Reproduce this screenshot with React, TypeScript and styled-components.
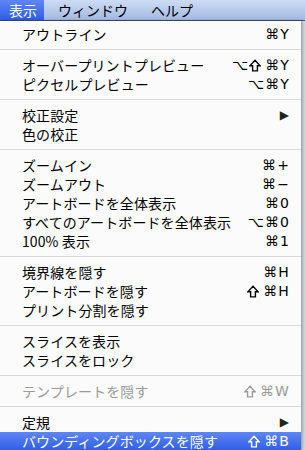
import styled, { createGlobalStyle } from 'styled-components'

const GlobalStyle = createGlobalStyle`
  html, body {
    margin: 0;
    padding: 0;
    background: #d4d6da;
  }
  body {
    width: 305px;
    height: 450px;
    overflow: hidden;
    font-family: "Noto Sans CJK JP", "DejaVu Sans", sans-serif;
  }
`

const Screen = styled.div`
  display: flex;
  flex-direction: column;
  width: 305px;
  height: 450px;
  overflow: hidden;
`

const MenuBar = styled.div`
  display: flex;
  align-items: stretch;
  height: 20px;
  background: linear-gradient(#cddcf6, #a4b9df);
  border-bottom: 1px solid #3b4f79;
  flex-shrink: 0;
`

const BarItem = styled.div<{ $active?: boolean }>`
  display: flex;
  align-items: center;
  padding: 0 ${({ $active }) => ($active ? '7px' : '9px')} 0 ${({ $active }) => ($active ? '9px' : '4px')};
  font-size: 14px;
  color: ${({ $active }) => ($active ? '#fff' : '#000')};
  background: ${({ $active }) =>
    $active ? 'linear-gradient(#5f86f3, #2f5de6)' : 'transparent'};
  margin-right: 10px;
`

const Menu = styled.div`
  display: flex;
  flex-direction: column;
  width: 301px;
  padding-top: 4px;
  background: rgba(252, 252, 252, 0.97);
  box-shadow: 1px 0 3px rgba(0, 0, 0, 0.35);
  flex: 1;
`

const Item = styled.div<{ $selected?: boolean; $disabled?: boolean }>`
  display: flex;
  align-items: center;
  justify-content: space-between;
  height: 19px;
  line-height: 19px;
  padding: 0 12px 0 22px;
  font-size: 14px;
  letter-spacing: 0.1px;
  color: ${({ $selected, $disabled }) =>
    $selected ? '#fff' : $disabled ? '#9a9a9a' : '#000'};
  background: ${({ $selected }) =>
    $selected ? 'linear-gradient(#5f86f3, #2f5de6)' : 'transparent'};
  white-space: nowrap;
  flex-shrink: 0;
`

const Shortcut = styled.span`
  display: flex;
  align-items: center;
  gap: 1px;
  font-family: "DejaVu Sans", sans-serif;
  font-size: 14px;
  line-height: 19px;
`

const ShiftIcon = styled.svg`
  width: 12px;
  height: 13px;
  margin-right: 3px;
`

const Arrow = styled.span`
  font-family: "DejaVu Sans", sans-serif;
  font-size: 12px;
  color: #222;
`

const Separator = styled.div`
  height: 1px;
  margin: 5px 0 6px;
  background: #dadada;
  flex-shrink: 0;
`

type Entry =
  | { label: string; key?: string; sub?: boolean; disabled?: boolean; selected?: boolean }
  | 'sep'

const entries: Entry[] = [
  { label: 'アウトライン', key: '⌘Y' },
  'sep',
  { label: 'オーバープリントプレビュー', key: '⌥⇧⌘Y' },
  { label: 'ピクセルプレビュー', key: '⌥⌘Y' },
  'sep',
  { label: '校正設定', sub: true },
  { label: '色の校正' },
  'sep',
  { label: 'ズームイン', key: '⌘+' },
  { label: 'ズームアウト', key: '⌘−' },
  { label: 'アートボードを全体表示', key: '⌘0' },
  { label: 'すべてのアートボードを全体表示', key: '⌥⌘0' },
  { label: '100% 表示', key: '⌘1' },
  'sep',
  { label: '境界線を隠す', key: '⌘H' },
  { label: 'アートボードを隠す', key: '⇧⌘H' },
  { label: 'プリント分割を隠す' },
  'sep',
  { label: 'スライスを表示' },
  { label: 'スライスをロック' },
  'sep',
  { label: 'テンプレートを隠す', key: '⇧⌘W', disabled: true },
  'sep',
  { label: '定規', sub: true },
  { label: 'バウンディングボックスを隠す', key: '⇧⌘B', selected: true },
]

function Shift() {
  return (
    <ShiftIcon viewBox="0 0 12 13" aria-label="⇧">
      <path
        d="M6 1.2 L11.2 6.8 H8.4 V11.9 H3.6 V6.8 H0.8 Z"
        fill="none"
        stroke="currentColor"
        strokeWidth="1.4"
        strokeLinejoin="miter"
      />
    </ShiftIcon>
  )
}

function Keys({ keys }: { keys: string }) {
  return (
    <Shortcut>
      {Array.from(keys).map((k, i) =>
        k === '⇧' ? <Shift key={i} /> : <span key={i}>{k}</span>
      )}
    </Shortcut>
  )
}

export default function App() {
  return (
    <>
      <GlobalStyle />
      <Screen>
        <MenuBar>
          <BarItem $active>表示</BarItem>
          <BarItem>ウィンドウ</BarItem>
          <BarItem>ヘルプ</BarItem>
        </MenuBar>
        <Menu>
          {entries.map((e, i) =>
            e === 'sep' ? (
              <Separator key={i} />
            ) : (
              <Item key={i} $selected={e.selected} $disabled={e.disabled}>
                <span>{e.label}</span>
                {e.key && <Keys keys={e.key} />}
                {e.sub && <Arrow>▶</Arrow>}
              </Item>
            )
          )}
        </Menu>
      </Screen>
    </>
  )
}
